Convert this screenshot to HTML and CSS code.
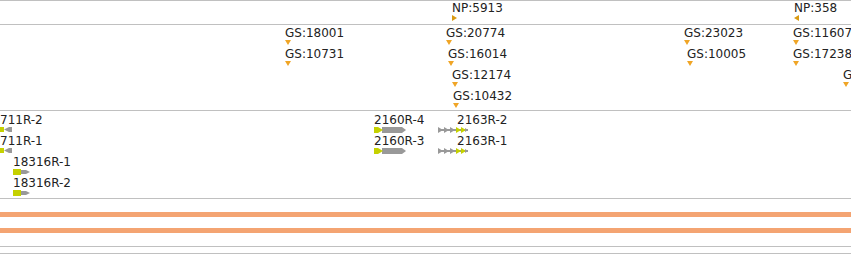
FILE: index.html
```html
<!DOCTYPE html>
<html>
<head>
  <title>Tracks</title>
  <link rel="stylesheet" href="styles.css">
</head>
<body>
  <div class="view">
    <!-- NP track -->
    <div class="track t-np">
      <div class="feat" style="left:452px;top:0px">
        <span class="lbl">NP:5913</span>
        <svg class="mk" width="6" height="6"><polygon points="0,0 5,3 0,6" fill="#d99a12"/></svg>
      </div>
      <div class="feat" style="left:794px;top:0px">
        <span class="lbl">NP:358</span>
        <svg class="mk" width="6" height="6"><polygon points="5,0 0,3 5,6" fill="#d99a12"/></svg>
      </div>
    </div>

    <!-- GS track -->
    <div class="track t-gs">
      <div class="feat" style="left:285px;top:1px"><span class="lbl">GS:18001</span><svg class="mk" width="6" height="5"><polygon points="0,0 6,0 3,5" fill="#f0a526"/></svg></div>
      <div class="feat" style="left:285px;top:22px"><span class="lbl">GS:10731</span><svg class="mk" width="6" height="5"><polygon points="0,0 6,0 3,5" fill="#f0a526"/></svg></div>
      <div class="feat" style="left:446px;top:1px"><span class="lbl">GS:20774</span><svg class="mk" width="6" height="5"><polygon points="0,0 6,0 3,5" fill="#f0a526"/></svg></div>
      <div class="feat" style="left:448px;top:22px"><span class="lbl">GS:16014</span><svg class="mk" width="6" height="5"><polygon points="0,0 6,0 3,5" fill="#f0a526"/></svg></div>
      <div class="feat" style="left:452px;top:43px"><span class="lbl">GS:12174</span><svg class="mk" width="6" height="5"><polygon points="0,0 6,0 3,5" fill="#f0a526"/></svg></div>
      <div class="feat" style="left:453px;top:64px"><span class="lbl">GS:10432</span><svg class="mk" width="6" height="5"><polygon points="0,0 6,0 3,5" fill="#f0a526"/></svg></div>
      <div class="feat" style="left:684px;top:1px"><span class="lbl">GS:23023</span><svg class="mk" width="6" height="5"><polygon points="0,0 6,0 3,5" fill="#f0a526"/></svg></div>
      <div class="feat" style="left:687px;top:22px"><span class="lbl">GS:10005</span><svg class="mk" width="6" height="5"><polygon points="0,0 6,0 3,5" fill="#f0a526"/></svg></div>
      <div class="feat" style="left:793px;top:1px"><span class="lbl">GS:11607</span><svg class="mk" width="6" height="5"><polygon points="0,0 6,0 3,5" fill="#f0a526"/></svg></div>
      <div class="feat" style="left:793px;top:22px"><span class="lbl">GS:17238</span><svg class="mk" width="6" height="5"><polygon points="0,0 6,0 3,5" fill="#f0a526"/></svg></div>
      <div class="feat" style="left:843px;top:43px"><span class="lbl">GS:19420</span><svg class="mk" width="6" height="5"><polygon points="0,0 6,0 3,5" fill="#f0a526"/></svg></div>
    </div>

    <!-- gene track -->
    <div class="track t-gene">
      <div class="feat" style="left:0px;top:2px">
        <span class="lbl">711R-2</span>
        <svg class="mk" width="12" height="5"><rect x="0" y="0" width="4" height="5" fill="#c5d100"/><polygon points="4,2.5 9,0 9,5" fill="#999"/><rect x="9" y="0" width="3" height="5" fill="#999"/></svg>
      </div>
      <div class="feat" style="left:0px;top:23px">
        <span class="lbl">711R-1</span>
        <svg class="mk" width="12" height="5"><rect x="0" y="0" width="4" height="5" fill="#c5d100"/><polygon points="4,2.5 9,0 9,5" fill="#999"/><rect x="9" y="0" width="3" height="5" fill="#999"/></svg>
      </div>
      <div class="feat" style="left:13px;top:44px">
        <span class="lbl">18316R-1</span>
        <svg class="mk" width="17" height="6"><rect x="0" y="0" width="8" height="6" fill="#c5d100"/><polygon points="8,1 13,1 17,3 13,5 8,5" fill="#999"/></svg>
      </div>
      <div class="feat" style="left:13px;top:65px">
        <span class="lbl">18316R-2</span>
        <svg class="mk" width="17" height="6"><rect x="0" y="0" width="8" height="6" fill="#c5d100"/><polygon points="8,1 13,1 17,3 13,5 8,5" fill="#999"/></svg>
      </div>
      <div class="feat" style="left:374px;top:2px">
        <span class="lbl">2160R-4</span>
        <svg class="mk" width="32" height="6"><rect x="8" y="0" width="20" height="6" fill="#999"/><polygon points="28,0 32,3 28,6" fill="#999"/><rect x="0" y="0" width="4" height="6" fill="#c5d100"/><polygon points="4,0 9,3 4,6" fill="#c5d100"/></svg>
      </div>
      <div class="feat" style="left:374px;top:23px">
        <span class="lbl">2160R-3</span>
        <svg class="mk" width="32" height="6"><rect x="8" y="0" width="20" height="6" fill="#999"/><polygon points="28,0 32,3 28,6" fill="#999"/><rect x="0" y="0" width="4" height="6" fill="#c5d100"/><polygon points="4,0 9,3 4,6" fill="#c5d100"/></svg>
      </div>
      <div class="feat" style="left:438px;top:2px">
        <span class="lbl shift">2163R-2</span>
        <svg class="mk" width="30" height="6"><rect x="0" y="2" width="30" height="2" fill="#999"/><polygon points="0,0 5,3 0,6" fill="#999"/><polygon points="6,0 11,3 6,6" fill="#999"/><polygon points="12,0 17,3 12,6" fill="#999"/><polygon points="18,0 23,3 18,6" fill="#c5d100"/><polygon points="23,0 28,3 23,6" fill="#c5d100"/><polygon points="27,1 30,3 27,5" fill="#999"/></svg>
      </div>
      <div class="feat" style="left:438px;top:23px">
        <span class="lbl shift">2163R-1</span>
        <svg class="mk" width="30" height="6"><rect x="0" y="2" width="30" height="2" fill="#999"/><polygon points="0,0 5,3 0,6" fill="#999"/><polygon points="6,0 11,3 6,6" fill="#999"/><polygon points="12,0 17,3 12,6" fill="#999"/><polygon points="18,0 23,3 18,6" fill="#c5d100"/><polygon points="23,0 28,3 23,6" fill="#c5d100"/><polygon points="27,1 30,3 27,5" fill="#999"/></svg>
      </div>
    </div>

    <!-- coverage track -->
    <div class="track t-cov">
      <div class="band"></div>
      <div class="band"></div>
    </div>

    <div class="track t-empty"></div>
  </div>
</body>
</html>
```

FILE: styles.css
```css
body {
  margin: 0;
  padding: 0;
  background-color: #fff;
  font-family: "DejaVu Sans", sans-serif;
  font-size: 12px;
  color: #222;
}

.view {
  width: 851px;
  height: 254px;
  overflow: hidden;
}

.track {
  position: relative;
  border-top: 1px solid #c0c0c0;
  overflow: hidden;
}

.t-np {
  height: 23px;
}

.t-gs {
  height: 85px;
}

.t-gene {
  height: 87px;
}

.t-cov {
  box-sizing: border-box;
  height: 48px;
  padding-top: 13px;
  display: flex;
  flex-direction: column;
  gap: 11px;
}

.t-empty {
  height: 6px;
  border-bottom: 1px solid #c0c0c0;
}

.band {
  height: 5px;
  background-color: #f4a472;
}

.feat {
  position: absolute;
  display: flex;
  flex-direction: column;
  align-items: flex-start;
  white-space: nowrap;
  line-height: 14px;
}

.lbl.shift {
  padding-left: 19px;
}

.mk {
  display: block;
}
```
